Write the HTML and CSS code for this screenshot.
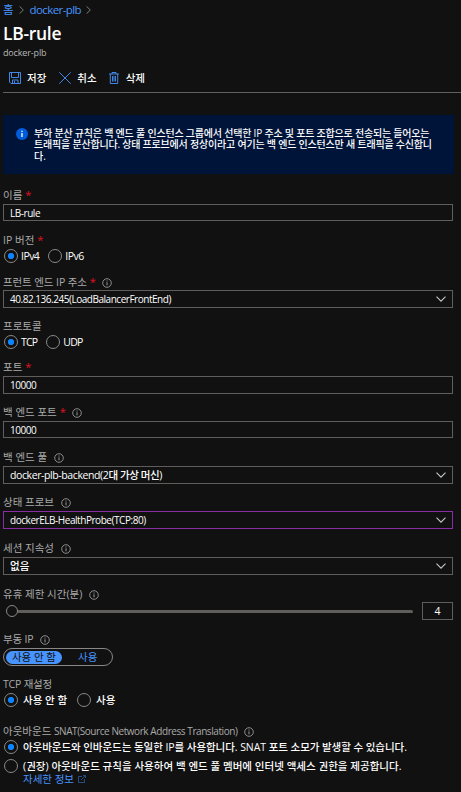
FILE: index.html
```html
<!DOCTYPE html>
<html lang="ko">
<head>
<meta charset="utf-8">
<title>LB-rule</title>
<link rel="stylesheet" href="styles.css">
</head>
<body>
<svg class="defs" aria-hidden="true">
  <symbol id="info" viewBox="0 0 10 10"><circle cx="5" cy="5" r="4.3" fill="none" stroke="currentColor" stroke-width=".8"/><path d="M5 4.3v3M5 2.5v1" stroke="currentColor" stroke-width=".9"/></symbol>
  <symbol id="down" viewBox="0 0 10 6"><path d="M.5.7 5 5.2 9.5.7" fill="none" stroke="currentColor" stroke-width="1.1"/></symbol>
  <symbol id="right" viewBox="0 0 5 8"><path d="M.5.3 4.3 4 .5 7.7" fill="none" stroke="currentColor" stroke-width=".9"/></symbol>
</svg>
<header>
  <nav class="crumbs"><a>홈</a><svg class="sep"><use href="#right"/></svg><a class="crumb-name">docker-plb</a><svg class="sep"><use href="#right"/></svg></nav>
  <h1>LB-rule</h1>
  <p class="subtitle">docker-plb</p>
</header>
<div class="toolbar">
  <button><svg class="save" viewBox="0 0 12 12"><path d="M.5.5h11v11h-9.5l-1.5-1.5zM2.5.5v5h7v-5M3.5 11.5v-3.500h5.500v3.500M5.500 9v2.500" /></svg>저장</button>
  <button><svg class="cancel" viewBox="0 0 12 12"><path d="M.3.3l11.400 11.400M11.700.3.3 11.700"/></svg>취소</button>
  <button><svg class="trash" viewBox="0 0 10 12"><path d="M0 2h10M3 2V.5h4V2M1.300 2v9.500h7.400V2M3.500 4v5.500M5 4v5.500M6.500 4v5.500"/></svg>삭제</button>
</div>
<section class="notice">
  <svg class="notice-icon" viewBox="0 0 12 12"><circle cx="6" cy="6" r="6" fill="#015cda"/><path d="M6 5v4M6 2.700v1.300" stroke="#fff" stroke-width="1.300"/></svg>
  <p><span class="n1">부하 분산 규칙은 백 엔드 풀 인스턴스 그룹에서 선택한 IP 주소 및 포트 조합으로 전송되는 들어오는</span><br><span class="n2">트래픽을 분산합니다. 상태 프로브에서 정상이라고 여기는 백 엔드 인스턴스만 새 트래픽을 수신합니</span><br>다.</p>
</section>
<form>
  <div class="field"><div class="label">이름<b>*</b></div><div class="box short"><span class="latin">LB-rule</span></div></div>
  <div class="field h42"><div class="label">IP 버전<b>*</b></div><div class="radios"><i class="radio on"></i><span class="opt v4">IPv4</span><i class="radio"></i><span class="opt v4">IPv6</span></div></div>
  <div class="field h44 tight"><div class="label"><span class="fe-label">프런트 엔드 IP 주소</span><b>*</b><svg class="info"><use href="#info"/></svg></div><div class="box"><span class="latin frontend">40.82.136.245(LoadBalancerFrontEnd)</span><svg class="down"><use href="#down"/></svg></div></div>
  <div class="field h41"><div class="label">프로토콜</div><div class="radios"><i class="radio on"></i><span class="opt tcp">TCP</span><i class="radio"></i><span class="opt tcp">UDP</span></div></div>
  <div class="field"><div class="label">포트<b>*</b></div><div class="box"><span class="latin">10000</span></div></div>
  <div class="field"><div class="label">백 엔드 포트<b>*</b><svg class="info"><use href="#info"/></svg></div><div class="box short"><span class="latin">10000</span></div></div>
  <div class="field"><div class="label">백 엔드 풀<svg class="info"><use href="#info"/></svg></div><div class="box"><span class="pool">docker-plb-backend(2대 가상 머신)</span><svg class="down"><use href="#down"/></svg></div></div>
  <div class="field h46"><div class="label">상태 프로브<svg class="info"><use href="#info"/></svg></div><div class="box active"><span class="latin">dockerELB-HealthProbe(TCP:80)</span><svg class="down"><use href="#down"/></svg></div></div>
  <div class="field h46"><div class="label">세션 지속성<svg class="info"><use href="#info"/></svg></div><div class="box"><span class="none">없음</span><svg class="down"><use href="#down"/></svg></div></div>
  <div class="field tight"><div class="label">유휴 제한 시간(분)<svg class="info"><use href="#info"/></svg></div><div class="slider"><i class="thumb"></i><i class="track"></i><div class="value">4</div></div></div>
  <div class="field"><div class="label"><span class="float">부동 IP</span><svg class="info"><use href="#info"/></svg></div><div class="toggle"><span class="sel">사용 안 함</span><span class="other">사용</span></div></div>
  <div class="field h47"><div class="label"><span class="reset">TCP 재설정</span></div><div class="radios"><i class="radio on"></i><span class="opt ko off">사용 안 함</span><i class="radio"></i><span class="opt ko">사용</span></div></div>
  <div class="field last"><div class="label"><span>아웃바운드 <span class="snat">SNAT(Source Network Address Translation)</span></span><svg class="info"><use href="#info"/></svg></div>
    <div class="radios"><i class="radio on"></i><span class="opt ko o1">아웃바운드와 인바운드는 동일한 IP를 사용합니다. SNAT 포트 소모가 발생할 수 있습니다.</span></div>
    <div class="radios second"><i class="radio"></i><span class="opt ko o2">(권장) 아웃바운드 규칙을 사용하여 백 엔드 풀 멤버에 인터넷 액세스 권한을 제공합니다.</span></div>
    <a class="more">자세한 정보<svg viewBox="0 0 8 8"><path d="M4 1.500H.5v6h6V4M3 5l4.300-4.300M5 .5h2.500V3"/></svg></a>
  </div>
</form>
</body>
</html>
```
FILE: styles.css
```css
* { box-sizing: border-box; }
html, body { margin: 0; height: 792px; overflow: hidden; }
body { background: #111; color: #fff; font: 10.5px/14px "Open Sans", "Noto Sans CJK KR", sans-serif; white-space: nowrap; padding-left: 3px; }
svg { flex: none; }
.defs { position: absolute; width: 0; height: 0; }
h1, p { margin: 0; }
header { height: 64px; }
.crumbs { display: flex; align-items: center; height: 20px; color: #4894fe; font-size: 11.5px; }
.sep { width: 5px; height: 8px; margin: 0 6px 0 5px; color: #888; }
.crumb-name { letter-spacing: -.6px; }
h1 { font-size: 17.5px; line-height: 27px; height: 26px; font-weight: 600; letter-spacing: -.3px; }
.subtitle { font-size: 9px; line-height: 13px; color: #b8b8b8; letter-spacing: -.15px; }
.toolbar { display: flex; height: 29px; padding-left: 6px; border-bottom: 1px solid #606060; align-items: center; }
button { display: flex; align-items: center; border: 0; padding: 0; background: none; color: #fff; font: inherit; font-weight: 500; margin-right: 12px; height: 28px; }
button svg { width: 12px; height: 12px; margin-right: 6px; fill: none; stroke: #4894fe; stroke-width: .9; }
button:first-child { margin-right: 13px; }
button .trash { width: 10px; margin-right: 7px; }
.notice { width: 451px; height: 59px; margin-top: 22px; background: #00143a; display: flex; padding: 13px 0 0 13px; }
.notice-icon { width: 12px; height: 12px; margin: 0 6px 0 0; }
.notice p { line-height: 11.3px; font-size: 10px; font-weight: 500; }
.n1, .n2 { letter-spacing: -.2px; }
form { margin-top: 14px; width: 450px; }
.field { height: 45px; }
.h41 { height: 41px; } .h42 { height: 42px; } .h44 { height: 44px; } .h46 { height: 46px; } .h47 { height: 47px; } .last { height: 68px; }
.label { height: 14px; display: flex; align-items: center; color: #aaa; margin-bottom: 2px; }
.tight .label { margin-bottom: 1px; }
.label b { color: #e01123; font-weight: 400; margin-left: 3px; font-size: 11px; }
.info { width: 10px; height: 10px; margin: 1px 0 0 7px; color: #aaa; }
b + .info { margin-left: 6px; }
.fe-label { letter-spacing: -.1px; }
.box { height: 18px; border: 1px solid #605e5c; padding: 0 6px; display: flex; align-items: center; justify-content: space-between; }
.short { height: 17px; }
.active { border-color: #8a2da5; }
.down { width: 10px; height: 6px; color: #c8c8c8; }
.latin { font-size: 10px; font-weight: 500; letter-spacing: -.45px; }
.frontend { letter-spacing: -.47px; }
.pool { letter-spacing: -.4px; font-weight: 500; }
.none { font-weight: 500; }
.radios { display: flex; align-items: center; height: 14px; padding-left: 1px; }
.radio { flex: none; width: 14px; height: 14px; border: 1px solid #8a8886; border-radius: 50%; }
.on { background: radial-gradient(circle, #0a84ff 0 2.8px, transparent 3.4px); }
.opt { margin: 0 9px 0 3px; letter-spacing: -.3px; }
.v4 { letter-spacing: -.55px; }
.tcp { letter-spacing: -.8px; }
.ko { margin-left: 5px; letter-spacing: 0; font-weight: 500; }
.off { margin-right: 10px; }
.o1 { letter-spacing: -.06px; }
.o2 { letter-spacing: .03px; }
.snat { letter-spacing: -.43px; font-size: 10px; }
.float { letter-spacing: -.2px; }
.reset { letter-spacing: -.2px; }
.second { margin-top: 5px; }
.slider { display: flex; height: 18px; align-items: center; padding-left: 3px; }
.thumb { width: 12px; height: 12px; border: 1px solid #8a8886; border-radius: 50%; }
.track { width: 395px; height: 3px; background: #605e5c; border-radius: 0 2px 2px 0; margin-right: 9px; }
.value { width: 31px; height: 18px; border: 1px solid #605e5c; text-align: center; line-height: 16px; }
.toggle { width: 110px; height: 18px; border: 1px solid #8a8886; border-radius: 9px; display: flex; align-items: center; padding-left: 2px; }
.sel { width: 56px; height: 13px; line-height: 13px; background: #4894fe; color: #111; border-radius: 7px; text-align: center; }
.other { color: #4894fe; margin-left: 16px; }
.more { display: flex; align-items: center; height: 12px; margin: 0 0 0 20px; color: #4894fe; }
.more svg { width: 8px; height: 8px; margin-left: 4px; fill: none; stroke: #28568e; stroke-width: .9; }
```
